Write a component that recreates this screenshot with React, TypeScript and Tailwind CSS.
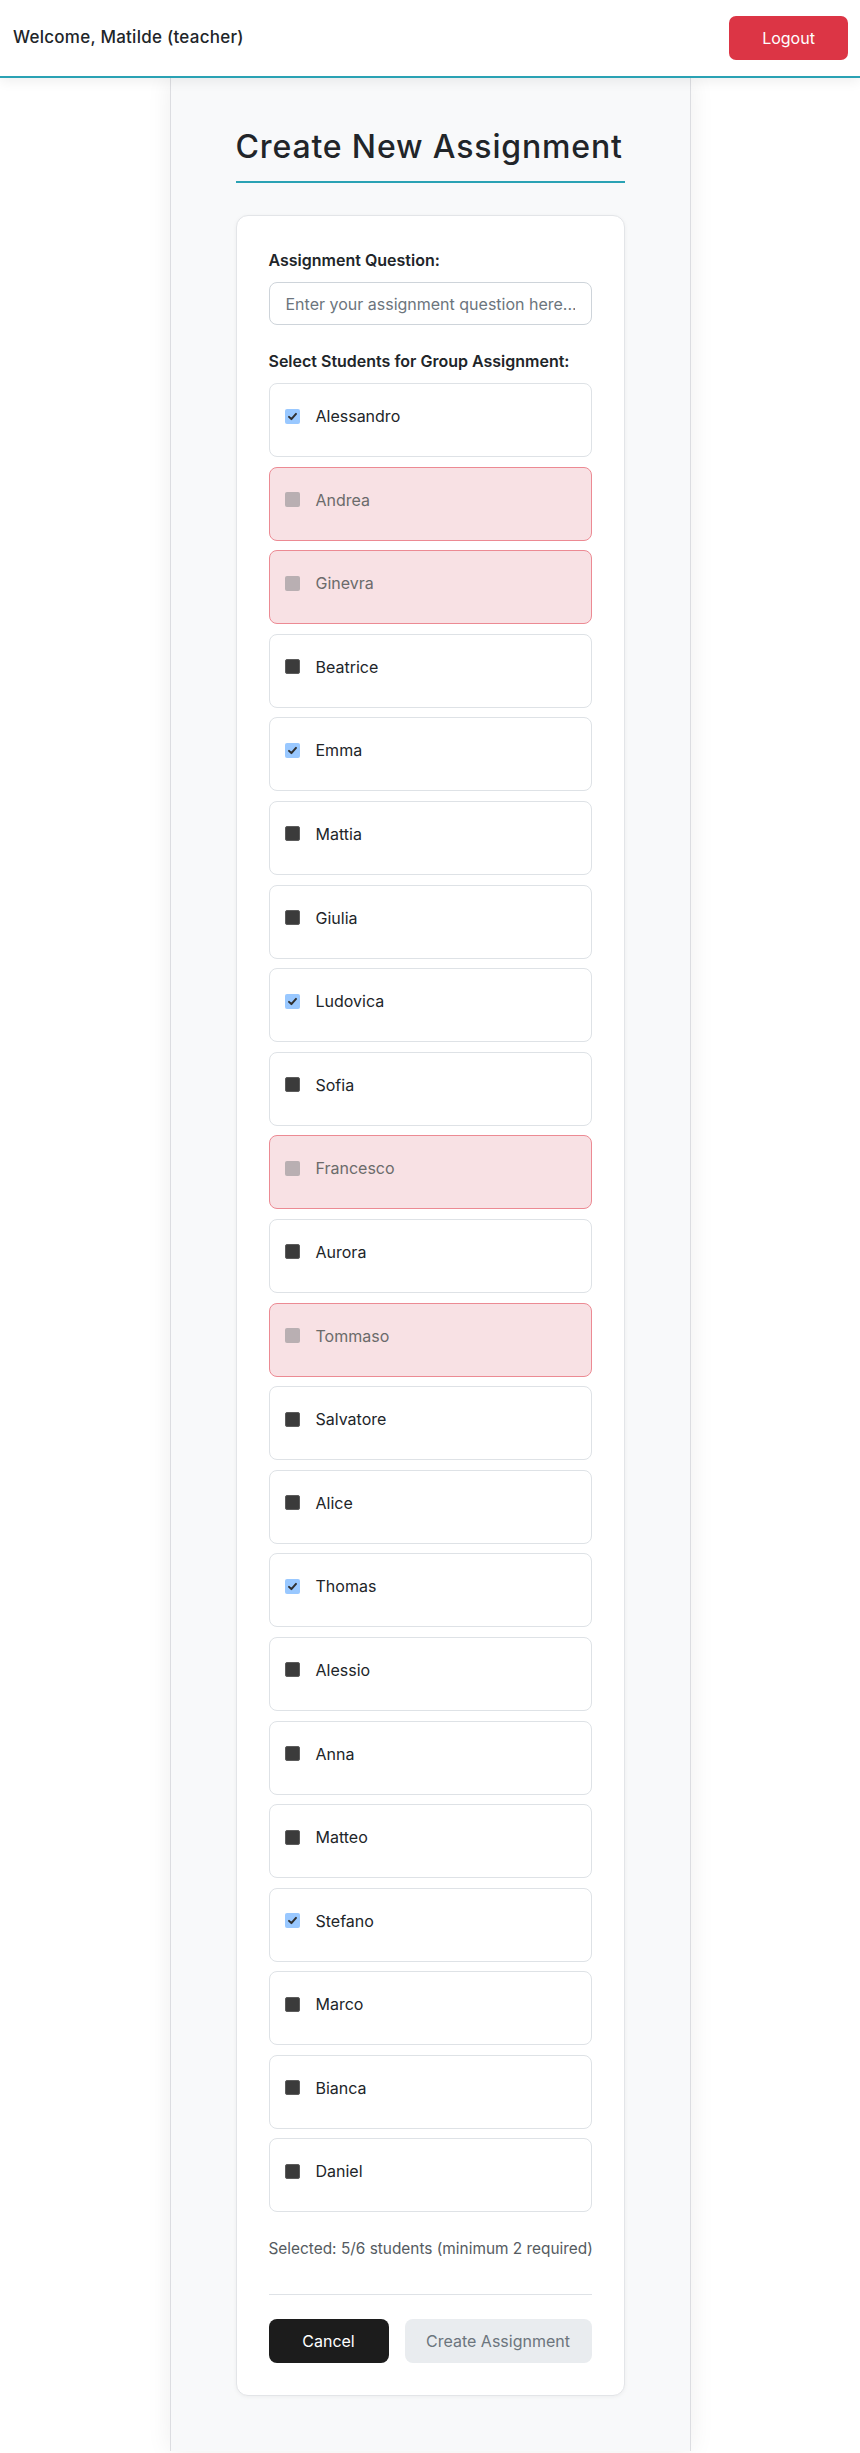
import { useState } from 'react'

type Student = {
  name: string
  checked?: boolean
  disabled?: boolean
}

const initialStudents: Student[] = [
  { name: 'Alessandro', checked: true },
  { name: 'Andrea', disabled: true },
  { name: 'Ginevra', disabled: true },
  { name: 'Beatrice' },
  { name: 'Emma', checked: true },
  { name: 'Mattia' },
  { name: 'Giulia' },
  { name: 'Ludovica', checked: true },
  { name: 'Sofia' },
  { name: 'Francesco', disabled: true },
  { name: 'Aurora' },
  { name: 'Tommaso', disabled: true },
  { name: 'Salvatore' },
  { name: 'Alice' },
  { name: 'Thomas', checked: true },
  { name: 'Alessio' },
  { name: 'Anna' },
  { name: 'Matteo' },
  { name: 'Stefano', checked: true },
  { name: 'Marco' },
  { name: 'Bianca' },
  { name: 'Daniel' },
]

function CheckBox({ checked, disabled }: { checked?: boolean; disabled?: boolean }) {
  if (disabled) {
    return <span className="block w-[15px] h-[15px] rounded-[2px] bg-[#b9afb2] shrink-0" />
  }
  if (checked) {
    return (
      <span className="flex items-center justify-center w-[15px] h-[15px] rounded-[2px] bg-[#99c8ff] shrink-0">
        <svg width="11" height="11" viewBox="0 0 12 12" fill="none">
          <path d="M2.2 6.4 L4.8 8.8 L9.8 3.2" stroke="#2f2f2f" strokeWidth="2.2" strokeLinecap="round" strokeLinejoin="round" />
        </svg>
      </span>
    )
  }
  return <span className="block w-[15px] h-[15px] rounded-[2px] bg-[#3b3b3b] border border-[#5c5c5c] shrink-0" />
}

export default function App() {
  const [question, setQuestion] = useState('')
  const [students, setStudents] = useState(initialStudents)

  const toggle = (i: number) => {
    setStudents((prev) =>
      prev.map((s, idx) => (idx === i && !s.disabled ? { ...s, checked: !s.checked } : s))
    )
  }

  const selected = students.filter((s) => s.checked).length

  return (
    <div className="min-h-screen bg-white text-[#212529] font-['Inter','Liberation_Sans',sans-serif]">
      {/* Header */}
      <header className="relative z-10 h-[78px] bg-white border-b-2 border-[#2aa2b4] shadow-[0_3px_12px_rgba(0,0,0,0.07)] flex items-center justify-between pl-[13px] pr-[12px]">
        <span className="text-[17px] tracking-[0.25px] font-medium text-[#212529]">Welcome, Matilde (teacher)</span>
        <button className="w-[119px] h-[44px] rounded-[7px] bg-[#dc3545] text-white text-base">
          Logout
        </button>
      </header>

      {/* Main column */}
      <main className="mx-auto w-[521px] bg-[#f8f9fa] border-x border-[#dcdde1] shadow-[0_0_24px_rgba(0,0,0,0.07)] pb-[55px]">
        <div className="w-[389px] mx-auto">
          <h1 className="pt-[50px] pb-[15px] text-[32px] leading-[38px] font-medium tracking-[0.85px] text-[#212529] border-b-2 border-[#2aa2b4]">
            Create New Assignment
          </h1>

          <section className="mt-[32px] bg-white border border-[#e3e5e8] rounded-xl shadow-[0_1px_4px_rgba(0,0,0,0.05)] p-8">
            <label className="block text-base leading-6 font-semibold text-[#212529] mb-2.5">
              Assignment Question:
            </label>
            <input
              type="text"
              value={question}
              onChange={(e) => setQuestion(e.target.value)}
              placeholder="Enter your assignment question here..."
              className="w-full h-[43px] px-4 rounded-lg border border-[#ced4da] bg-white text-base text-[#212529] placeholder:text-[#6c757d] focus:outline-none"
            />

            <label className="block mt-6 text-base leading-6 font-semibold text-[#212529] mb-2.5">
              Select Students for Group Assignment:
            </label>
            <div className="flex flex-col gap-[9.6px]">
              {students.map((s, i) => (
                <div
                  key={s.name}
                  onClick={() => toggle(i)}
                  className={`h-[74px] rounded-lg border px-[15px] pt-5 ${
                    s.disabled
                      ? 'bg-[#f8e1e4] border-[#ec8a93] text-[#6b6b6b]'
                      : 'bg-white border-[#dee2e6] text-[#212529] cursor-pointer'
                  }`}
                >
                  <div className="flex items-center h-6 gap-4">
                    <CheckBox checked={s.checked} disabled={s.disabled} />
                    <span className="text-base">{s.name}</span>
                  </div>
                </div>
              ))}
            </div>

            <p className="mt-[25px] text-[15.4px] leading-6 whitespace-nowrap text-[#555b61]">
              Selected: {selected}/6 students (minimum 2 required)
            </p>

            <div className="mt-[33px] border-t border-[#dee2e6]" />

            <div className="mt-6 flex gap-4">
              <button className="w-[120px] h-[44px] rounded-lg bg-[#1c1c1c] text-white text-base">
                Cancel
              </button>
              <button
                disabled
                className="flex-1 h-[44px] rounded-lg bg-[#e9ecef] text-[#6c757d] text-base cursor-default"
              >
                Create Assignment
              </button>
            </div>
          </section>
        </div>
      </main>
    </div>
  )
}
